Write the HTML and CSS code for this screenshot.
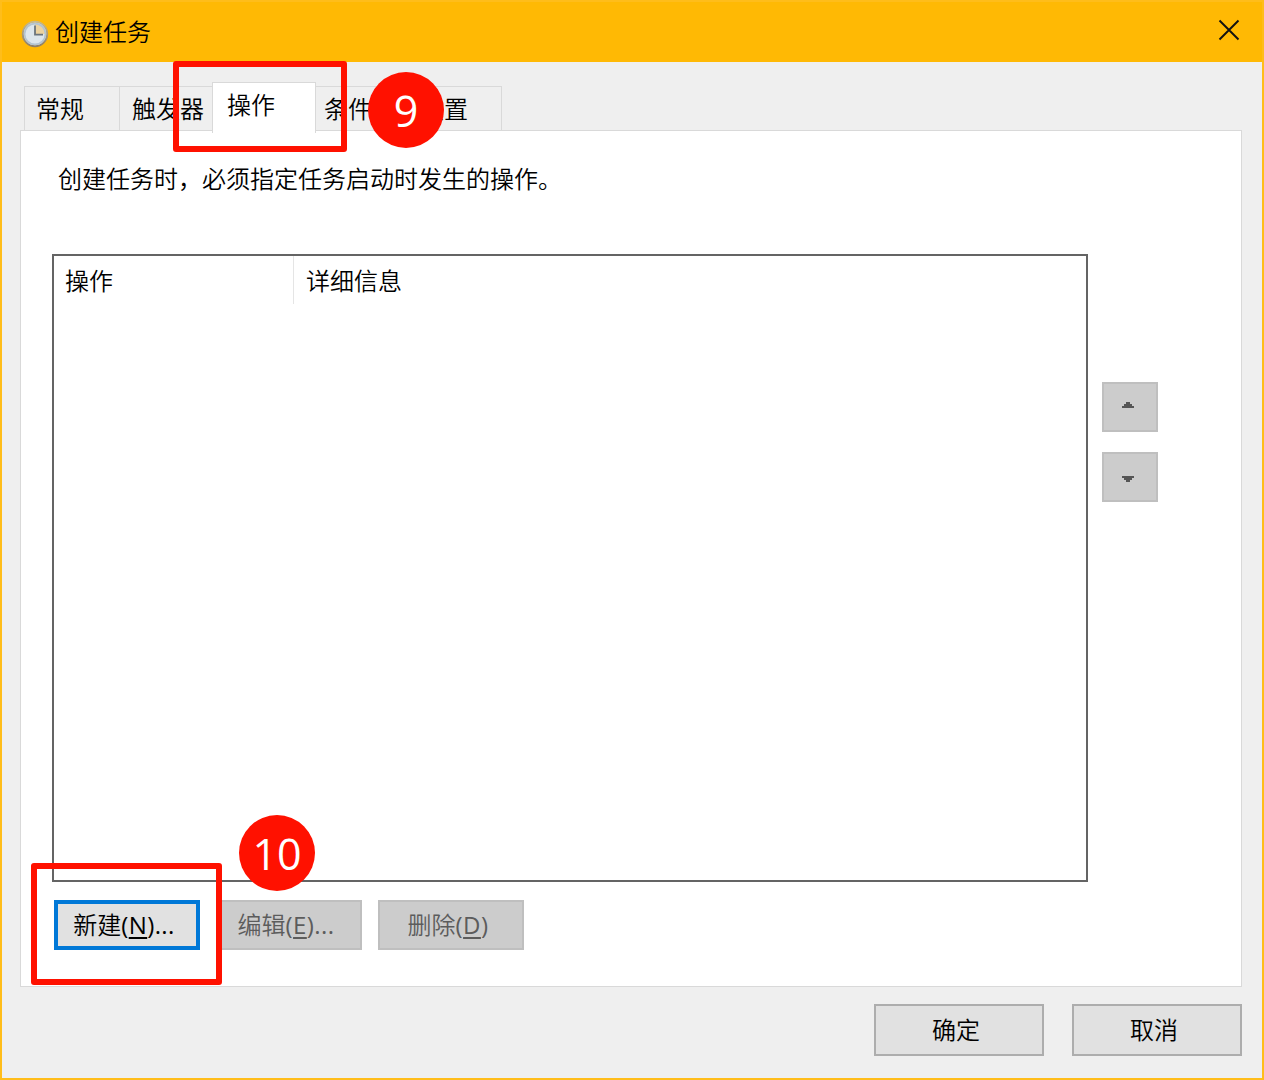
FILE: index.html
```html
<!DOCTYPE html>
<html lang="zh-CN">
<head>
<meta charset="utf-8">
<title>创建任务</title>
<link rel="stylesheet" href="styles.css">
</head>
<body>
<div class="window">
  <header class="titlebar">
    <svg class="clock" width="28" height="28" viewBox="0 0 28 28">
      <defs>
        <linearGradient id="rim" x1="0" y1="0" x2="0" y2="1">
          <stop offset="0" stop-color="#c6b88c"/>
          <stop offset="1" stop-color="#8d7f68"/>
        </linearGradient>
      </defs>
      <circle cx="14" cy="14" r="12.2" fill="#dde6ec" stroke="url(#rim)" stroke-width="2"/>
      <path d="M14 14V3.6A10.4 10.4 0 0 1 24.4 14Z" fill="#ecd3a0"/>
      <circle cx="14" cy="14" r="10.4" fill="none" stroke="#b4c4d0" stroke-width="1.6"/>
      <path d="M14 5.5V14.6H22" fill="none" stroke="#6b747c" stroke-width="1.8"/>
    </svg>
    <h1 class="title">创建任务</h1>
    <button class="close" aria-label="关闭">
      <svg width="22" height="22" viewBox="0 0 22 22"><path d="M1.5 1.5L20.5 20.5M20.5 1.5L1.5 20.5" stroke="#111" stroke-width="1.9"/></svg>
    </button>
  </header>
  <main class="content">
    <nav class="tabs">
      <div class="tab general">常规</div>
      <div class="tab triggers">触发器</div>
      <div class="tab active">操作</div>
      <div class="tab conditions">条件</div>
      <div class="tab settings">设置</div>
    </nav>
    <section class="panel">
      <p class="hint">创建任务时，必须指定任务启动时发生的操作。</p>
      <div class="list-row">
        <div class="list">
          <div class="list-head">
            <div class="col name">操作</div>
            <div class="col detail">详细信息</div>
          </div>
        </div>
        <div class="movers">
          <button class="btn disabled mover" aria-label="上移"><svg width="12" height="6" viewBox="0 0 12 6" shape-rendering="crispEdges"><path d="M4 0h4v2h2v2h2v2H0V4h2V2h2z" fill="#555"/></svg></button>
          <button class="btn disabled mover down" aria-label="下移"><svg width="12" height="6" viewBox="0 0 12 6" shape-rendering="crispEdges"><path d="M0 0h12v2h-2v2H8v2H4V4H2V2H0z" fill="#555"/></svg></button>
        </div>
      </div>
      <div class="actions">
        <button class="btn focus">新建<span class="latin">(<u>N</u>)...</span></button>
        <button class="btn disabled">编辑<span class="latin">(<u>E</u>)...</span></button>
        <button class="btn disabled">删除<span class="latin">(<u>D</u>)</span></button>
      </div>
    </section>
    <footer class="footer">
      <button class="btn wide">确定</button>
      <button class="btn wide">取消</button>
    </footer>
  </main>
  <div class="mark mark-tab"></div>
  <div class="badge badge-tab">9</div>
  <div class="mark mark-new"></div>
  <div class="badge badge-new">10</div>
</div>
</body>
</html>
```
FILE: styles.css
```css
* { box-sizing: border-box; }
body {
  margin: 0;
  font: 350 24px/36px "Noto Sans CJK SC", sans-serif;
  color: #000;
}
.window {
  position: relative;
  display: flex;
  flex-direction: column;
  width: 1264px;
  height: 1080px;
  border: 2px solid #ffbd1a;
  background: #efefef;
  overflow: hidden;
}
.titlebar {
  display: flex;
  align-items: center;
  height: 60px;
  padding: 0 22px 0 19px;
  background: #ffb904;
}
.clock { margin-top: 3px; }
.title { margin: 0 0 2px 6px; font-size: 24px; font-weight: inherit; }
.close {
  display: flex;
  margin: 0 0 4px auto;
  padding: 0;
  border: 0;
  background: none;
}
.content { flex: 1; padding: 20px 20px 0 18px; }
.tabs {
  display: flex;
  align-items: flex-end;
  height: 48px;
  padding-left: 4px;
}
.tab {
  height: 44px;
  padding: 3px 0 0 12px;
  border: 1px solid #d9d9d9;
  border-width: 1px 0 0 1px;
}
.general { width: 95px; padding-left: 11px; }
.triggers { width: 93px; }
.active {
  position: relative;
  width: 104px;
  height: 51px;
  margin-bottom: -3px;
  padding-left: 14px;
  border-right-width: 1px;
  background: #fff;
}
.conditions { width: 96px; padding-left: 8px; border-left: 0; }
.settings { width: 90px; padding-left: 7px; border-right-width: 1px; }
.panel {
  width: 1222px;
  height: 857px;
  padding: 29px 0 0 31px;
  border: 1px solid #d9d9d9;
  background: #fff;
}
.hint { margin: 0 0 58px 6px; }
.list-row { display: flex; gap: 14px; }
.list { width: 1036px; height: 628px; border: 2px solid #646464; }
.list-head { display: flex; height: 48px; line-height: 47px; }
.col { padding-left: 12px; }
.name { width: 240px; padding-left: 11px; border-right: 1px solid #e5e5e5; }
.movers { display: flex; flex-direction: column; gap: 20px; padding-top: 128px; }
.btn {
  width: 146px;
  height: 50px;
  padding: 0 6px 2px 0;
  border: 2px solid #adadad;
  background: #e1e1e1;
  color: #000;
  font: inherit;
  line-height: 44px;
}
.disabled { border-color: #bfbfbf; background: #ccc; color: #5c5c5c; }
.focus { border: 4px solid #0078d7; line-height: 40px; }
.mover { display: flex; justify-content: center; width: 56px; padding: 18px 4px 0 0; }
.down { padding-top: 22px; }
.actions { display: flex; gap: 16px; padding: 18px 0 0 2px; }
.latin { font-family: "Open Sans", sans-serif; font-weight: 400; line-height: 1; letter-spacing: 0.4px; }
.latin u { text-underline-offset: 3px; text-decoration-thickness: 2px; }
.footer { display: flex; justify-content: flex-end; gap: 28px; padding-top: 17px; }
.wide { width: 170px; height: 52px; padding-bottom: 3px; }
.mark { position: absolute; border: 6px solid #ff1100; border-radius: 3px; }
.mark-tab { left: 171px; top: 59px; width: 174px; height: 91px; }
.mark-new { left: 29px; top: 861px; width: 191px; height: 122px; }
.badge {
  position: absolute;
  width: 76px;
  height: 76px;
  border-radius: 50%;
  background: #ff1100;
  color: #fff;
  font: 400 43px/78px "Open Sans", sans-serif;
  text-align: center;
}
.badge-tab { left: 366px; top: 70px; }
.badge-new { left: 237px; top: 813px; }
```
